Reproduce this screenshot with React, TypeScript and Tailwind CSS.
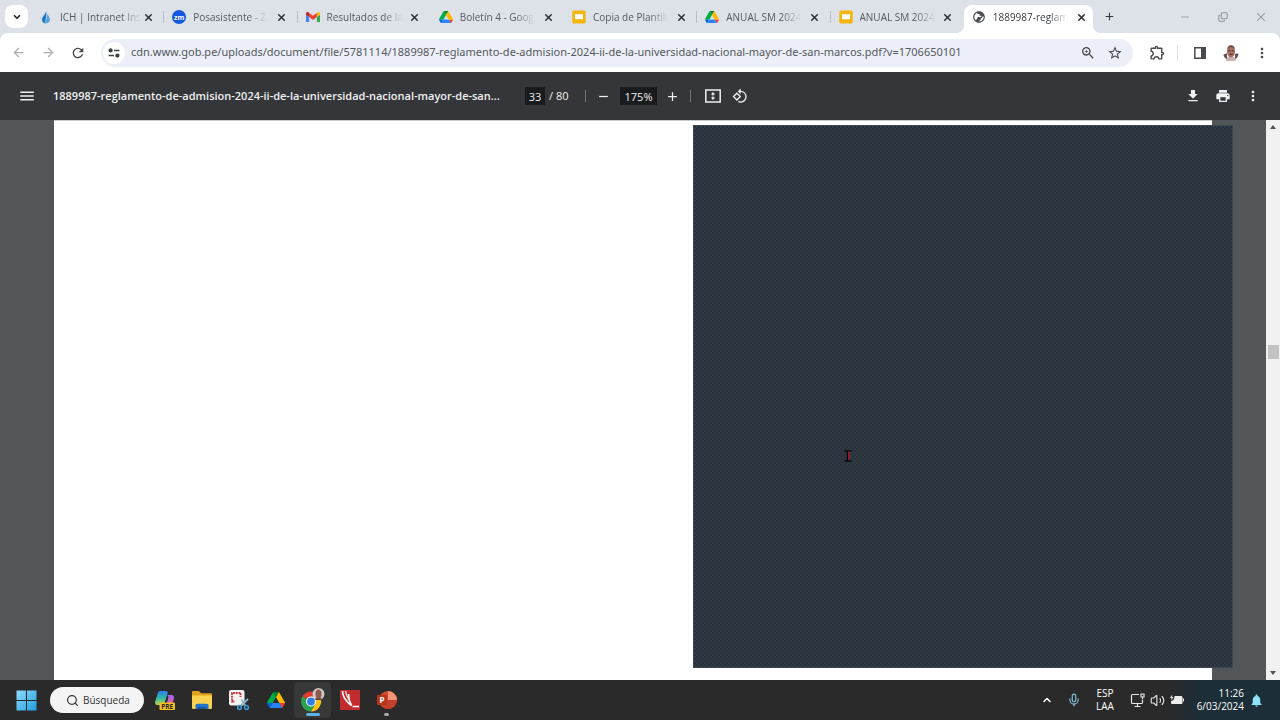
import React, { useState } from 'react';
import clsx from 'clsx';
import {
  MdAdd,
  MdArrowBack,
  MdArrowForward,
  MdFileDownload,
  MdMenu,
  MdMoreVert,
  MdNotifications,
  MdOutlineExtension,
  MdPrint,
  MdPublic,
  MdRefresh,
  MdRemove,
  MdRotate90DegreesCcw,
  MdStarOutline,
  MdZoomIn,
} from 'react-icons/md';
import { ChevronDown, ChevronUp, Copy, Mic, Minus, Search, Volume2, X } from 'lucide-react';

function DriveIcon({ className }: { className: string }) {
  return (
    <svg viewBox="0 0 87.3 78" className={className} aria-hidden="true">
      <path d="m6.6 66.85 3.85 6.65c.8 1.4 1.95 2.5 3.3 3.3l13.75-23.8h-27.5c0 1.55.4 3.1 1.2 4.5z" fill="#0066da" />
      <path d="m43.65 25-13.75-23.8c-1.35.8-2.5 1.9-3.3 3.3l-25.4 44a9.06 9.06 0 0 0 -1.2 4.5h27.5z" fill="#00ac47" />
      <path d="m73.55 76.8c1.35-.8 2.5-1.9 3.3-3.3l1.6-2.75 7.65-13.25c.8-1.4 1.2-2.95 1.2-4.5h-27.5l5.85 11.5z" fill="#ea4335" />
      <path d="m43.65 25 13.75-23.8c-1.35-.8-2.9-1.2-4.5-1.2h-18.5c-1.6 0-3.15.45-4.5 1.2z" fill="#00832d" />
      <path d="m59.8 53h-32.3l-13.75 23.8c1.35.8 2.9 1.2 4.5 1.2h50.8c1.6 0 3.15-.45 4.5-1.2z" fill="#2684fc" />
      <path d="m73.4 26.5-12.7-22c-.8-1.4-1.95-2.5-3.3-3.3l-13.75 23.8 16.15 28h27.45c0-1.55-.4-3.1-1.2-4.5z" fill="#ffba00" />
    </svg>
  );
}

function SlidesIcon() {
  return (
    <svg viewBox="0 0 14 14" className="size-3.5" aria-hidden="true">
      <rect x="0.3" y="0.5" width="13.4" height="13" rx="1.6" fill="#f4b60f" />
      <rect x="3" y="4.2" width="8" height="5" fill="#fff" />
    </svg>
  );
}

function GmailIcon() {
  return (
    <svg viewBox="52 42 88 66" className="w-3.5" aria-hidden="true">
      <path fill="#4285f4" d="M58 108h14V74L52 59v43c0 3.32 2.69 6 6 6" />
      <path fill="#34a853" d="M120 108h14c3.32 0 6-2.69 6-6V59l-20 15" />
      <path fill="#fbbc04" d="M120 48v26l20-15v-8c0-7.42-8.47-11.65-14.4-7.2" />
      <path fill="#ea4335" d="M72 74V48l24 18 24-18v26L96 92" />
      <path fill="#c5221f" d="M52 51v8l20 15V48l-5.6-4.2c-5.94-4.45-14.4-.22-14.4 7.2" />
    </svg>
  );
}

function DropIcon() {
  return (
    <svg viewBox="0 0 14 14" className="size-3.5" aria-hidden="true">
      <path d="M7.2 0.8C7 4 3 6.6 3 9.8c0 2 1.5 3.4 3.8 3.6C5.5 11 7.9 8.4 7.2 0.8z" fill="#1c74c9" />
      <path d="M8.2 3.4c.6 3.6-2 6.5-1.4 10 2.6-.1 4.1-1.4 4.1-3.6 0-2.2-1.6-3.8-2.7-6.4z" fill="#55a4e0" />
      <path d="M2.4 5.6C1.2 7.6.8 9.2 1.6 10.8c.4-1.6.4-3 .8-5.2z" fill="#a6d0ee" />
    </svg>
  );
}

function ZoomIcon() {
  return (
    <span className="flex size-3.5 items-center justify-center rounded-full bg-[#1558e0] text-[7px] leading-none font-bold text-white">
      zm
    </span>
  );
}

const TABS = [
  { title: 'ICH | Intranet Ins', icon: <DropIcon />, divider: true },
  { title: 'Posasistente - Z', icon: <ZoomIcon />, divider: true },
  { title: 'Resultados de la', icon: <GmailIcon /> },
  { title: 'Boletín 4 - Goog', icon: <DriveIcon className="w-3.5" /> },
  { title: 'Copia de Plantill', icon: <SlidesIcon />, divider: true },
  { title: 'ANUAL SM 2024', icon: <DriveIcon className="w-3.5" />, divider: true },
  { title: 'ANUAL SM 2024', icon: <SlidesIcon /> },
  { title: '1889987-reglam', icon: <MdPublic className="size-3.5 -scale-x-100 text-[#4a4d51]" /> },
];

function TabStrip() {
  const [active, setActive] = useState(7);

  return (
    <div className="flex h-[33px] shrink-0 bg-[#dde1e8]">
      <div className="flex w-[31px] shrink-0 items-center pl-[5px]">
        <button aria-label="Buscar pestañas" className="flex size-[23px] items-center justify-center rounded-lg bg-white">
          <ChevronDown className="size-2.5 text-[#222]" strokeWidth={4} />
        </button>
      </div>
      <div role="tablist" className="flex min-w-0 flex-1 pt-[5px]">
        {TABS.map((tab, i) => (
          <div key={i} className="relative flex min-w-0 flex-1 pr-1">
            <div
              className={clsx(
                'relative flex min-w-0 flex-1 items-center gap-[7px] pr-1 pb-1 pl-2',
                active === i &&
                  'rounded-t-lg bg-white before:absolute before:bottom-0 before:-left-2 before:size-2 before:bg-[radial-gradient(circle_at_0_0,transparent_8px,white_8px)] after:absolute after:-right-2 after:bottom-0 after:size-2 after:bg-[radial-gradient(circle_at_100%_0,transparent_8px,white_8px)]',
              )}
            >
              <button
                role="tab"
                aria-selected={active === i}
                onClick={() => setActive(i)}
                className="flex min-w-0 flex-1 items-center gap-[7px]"
              >
                <span className="flex w-3.5 shrink-0 justify-center">{tab.icon}</span>
                <span
                  className={clsx(
                    'flex-1 text-left text-[10px] leading-4 whitespace-nowrap [mask-image:linear-gradient(to_right,black_75%,transparent)]',
                    active === i ? 'text-[#3c3f43]' : 'text-[#565a61]',
                  )}
                >
                  {tab.title}
                </span>
              </button>
              <button aria-label="Cerrar pestaña" className="flex w-4 shrink-0 justify-center text-[#33363a]">
                <X className="size-[11px]" strokeWidth={3.5} />
              </button>
            </div>
            {tab.divider && <span className="absolute top-1.5 right-0 h-3 w-px bg-[#b9bdc5]" />}
          </div>
        ))}
      </div>
      <button aria-label="Nueva pestaña" className="flex w-6 shrink-0 items-center justify-center text-[#33363a]">
        <MdAdd className="size-[13px]" />
      </button>
      <div className="ml-[45px] flex shrink-0 text-[#8f9399]">
        <button aria-label="Minimizar" className="flex w-[38px] items-center justify-center">
          <Minus className="size-3" strokeWidth={1.5} />
        </button>
        <button aria-label="Restaurar" className="flex w-[38px] items-center justify-center">
          <Copy className="size-2.5 -scale-x-100 rotate-180" strokeWidth={2.5} />
        </button>
        <button aria-label="Cerrar" className="flex w-[38px] items-center justify-center">
          <X className="size-3.5" strokeWidth={1.8} />
        </button>
      </div>
    </div>
  );
}

function TuneIcon() {
  return (
    <svg viewBox="0 0 12 10" className="w-3" fill="none" stroke="#3c4043" strokeWidth="1.5" aria-hidden="true">
      <circle cx="2.6" cy="2.4" r="1.4" fill="#3c4043" />
      <path d="M6 2.4h5.4M.6 7.6H6" />
      <circle cx="9.4" cy="7.6" r="1.4" fill="#3c4043" />
    </svg>
  );
}

function Avatar() {
  return (
    <svg viewBox="0 0 16 16" className="size-4" aria-hidden="true">
      <path d="M0.4 9.5 4 8.2v6.4C2 13.4.8 11.8.4 9.5zM15.6 8.5 12 8.8v5.6c2-1.2 3.4-3.4 3.6-5.9z" fill="#6d5250" />
      <path d="M3 16c.2-3.4 2-4.6 5-4.6s4.8 1.2 5 4.2c-3 .6-7 .6-10 .4z" fill="#c9b2ae" />
      <ellipse cx="8" cy="6.4" rx="4" ry="6" fill="#a56f63" />
      <path d="M4.2 5C4.4 1.4 6 .3 8 .3S11.7 1.3 11.9 5c-1-2-2-2.7-3.9-2.7S5.2 3 4.2 5z" fill="#77504a" />
      <path d="M5.2 5.8h2.2M8.7 5.8h2.2M6.4 9.3h3.2" stroke="#4e2f2c" strokeWidth="1" />
    </svg>
  );
}

function AddressBar() {
  return (
    <div className="bg-[#dde1e8]">
      <div className="flex h-[39px] items-center rounded-t-lg bg-white pl-[3px] text-[#46494d]">
        <button aria-label="Atrás" className="flex w-[30px] shrink-0 justify-center text-[#a9acb0]">
          <MdArrowBack className="size-[15px]" />
        </button>
        <button aria-label="Adelante" className="flex w-[30px] shrink-0 justify-center text-[#a9acb0]">
          <MdArrowForward className="size-[15px]" />
        </button>
        <button aria-label="Recargar" className="flex w-[30px] shrink-0 justify-center">
          <MdRefresh className="size-4" />
        </button>
        <div className="ml-2 flex h-7 min-w-0 flex-1 items-center rounded-full bg-[#eceff7] pr-[5px] pl-0.5">
          <button aria-label="Información del sitio" className="flex size-[22px] shrink-0 items-center justify-center rounded-full bg-white">
            <TuneIcon />
          </button>
          <input
            aria-label="Dirección"
            className="ml-1.5 min-w-0 flex-1 bg-transparent font-['Noto_Sans',sans-serif] text-[11px] text-[#54585e] outline-none"
            defaultValue="cdn.www.gob.pe/uploads/document/file/5781114/1889987-reglamento-de-admision-2024-ii-de-la-universidad-nacional-mayor-de-san-marcos.pdf?v=1706650101"
          />
          <button aria-label="Zoom" className="flex w-[27px] shrink-0 justify-center">
            <MdZoomIn className="size-4" />
          </button>
          <button aria-label="Favoritos" className="flex w-[27px] shrink-0 justify-center">
            <MdStarOutline className="size-4" />
          </button>
        </div>
        <button aria-label="Extensiones" className="ml-2 flex w-8 shrink-0 justify-center">
          <MdOutlineExtension className="size-[17px]" />
        </button>
        <span className="ml-1 h-4 w-px shrink-0 bg-[#dfe2e8]" />
        <button aria-label="Panel lateral" className="ml-1.5 flex w-8 shrink-0 justify-center">
          <svg viewBox="0 0 12 12" className="size-3">
            <path d="M.8.8h10.4v10.4H.8z" fill="none" stroke="currentColor" strokeWidth="1.5" />
            <path d="M7 1h4.5v10H7z" fill="currentColor" />
          </svg>
        </button>
        <button aria-label="Perfil" className="flex w-[30px] shrink-0 justify-center">
          <Avatar />
        </button>
        <button aria-label="Menú" className="mr-0.5 flex w-8 shrink-0 justify-center">
          <MdMoreVert className="size-4" />
        </button>
      </div>
    </div>
  );
}

function PdfToolbar() {
  return (
    <div className="flex h-12 shrink-0 items-center bg-[#343639] text-[#f0f0f0]">
      <button aria-label="Menú" className="ml-[17px] flex w-5 shrink-0 justify-center">
        <MdMenu className="size-[18px]" />
      </button>
      <h1 className="ml-4 w-[454px] text-[11px] font-semibold whitespace-nowrap">
        1889987-reglamento-de-admision-2024-ii-de-la-universidad-nacional-mayor-de-san...
      </h1>
      <input
        aria-label="Página"
        defaultValue="33"
        className="ml-[18px] h-[18px] w-5 bg-[#1a1b1d] text-center text-[11px] outline-none"
      />
      <span className="ml-1 w-5 text-[11px] whitespace-nowrap">/ 80</span>
      <span className="ml-4 h-3 w-px bg-[#75777a]" />
      <button aria-label="Alejar" className="ml-[7px] flex w-5 justify-center">
        <MdRemove className="size-[15px]" />
      </button>
      <input
        aria-label="Nivel de zoom"
        defaultValue="175%"
        className="ml-[7px] h-[18px] w-[37px] bg-[#1a1b1d] text-center text-[11px] outline-none"
      />
      <button aria-label="Acercar" className="ml-[5px] flex w-5 justify-center">
        <MdAdd className="size-[15px]" />
      </button>
      <span className="ml-2 h-3 w-px bg-[#75777a]" />
      <button aria-label="Ajustar a la página" className="ml-3 flex w-5 justify-center">
        <svg viewBox="0 0 16 14" className="w-4" fill="currentColor">
          <path d="M.8 1h14.4v12H.8z" fill="none" stroke="currentColor" strokeWidth="1.5" />
          <path d="M8 3 5.8 5.5h1.5v1h1.4v-1h1.5zM8 11 5.8 8.5h1.5v-1h1.4v1h1.5z" />
        </svg>
      </button>
      <button aria-label="Girar" className="ml-[7px] flex w-5 justify-center">
        <MdRotate90DegreesCcw className="size-4" />
      </button>
      <div className="mr-3 ml-auto flex">
        <button aria-label="Descargar" className="flex w-[30px] justify-center">
          <MdFileDownload className="size-4" />
        </button>
        <button aria-label="Imprimir" className="flex w-[30px] justify-center">
          <MdPrint className="size-4" />
        </button>
        <button aria-label="Más acciones" className="flex w-[30px] justify-center">
          <MdMoreVert className="size-4" />
        </button>
      </div>
    </div>
  );
}

function Viewer() {
  return (
    <main className="flex min-h-0 flex-1 bg-[#525659]">
      <div className="relative flex min-w-0 flex-1 px-[54px]">
        <div className="flex-1 border-t border-[#c9cacb] bg-white" />
        <div className="absolute top-[5px] right-[33px] bottom-3 w-[540px] border border-[#3a4650] bg-[#29323c] bg-[conic-gradient(#303a44_25%,transparent_0_50%,#303a44_0_75%,transparent_0)] bg-[length:4px_4px]">
          <svg viewBox="0 0 8 12" className="absolute top-[324px] left-[150px] w-2" fill="none" aria-hidden="true">
            <path d="M.5 1h7M.5 11h7M3.500 1v10" stroke="#08090b" strokeWidth="1.5" />
            <path d="M5 1.500v8.500" stroke="#a81a22" strokeWidth="1.500" />
          </svg>
        </div>
      </div>
      <div className="flex w-3.5 shrink-0 flex-col items-center bg-[#f1f1f2] py-[5px]">
        <span className="border-x-[3px] border-b-4 border-x-transparent border-b-[#505050]" />
        <span className="flex-[216]" />
        <span className="h-3.5 w-[11px] bg-[#c3c3c3]" />
        <span className="flex-[312]" />
        <span className="border-x-[3px] border-t-4 border-x-transparent border-t-[#505050]" />
      </div>
    </main>
  );
}

function CopilotIcon() {
  return (
    <svg viewBox="0 0 22 22" className="size-[22px]" aria-hidden="true">
      <defs>
        <linearGradient id="cp-a" x1="0" y1="0" x2="0" y2="1">
          <stop offset="0" stopColor="#2f7df0" />
          <stop offset="0.5" stopColor="#2fb8a8" />
          <stop offset="1" stopColor="#b8d84a" />
        </linearGradient>
        <linearGradient id="cp-b" x1="0" y1="0" x2="0" y2="1">
          <stop offset="0" stopColor="#9a6cf4" />
          <stop offset="0.6" stopColor="#e85bb0" />
          <stop offset="1" stopColor="#f79a55" />
        </linearGradient>
      </defs>
      <path d="M6.5 2H12c1.5 0 2 1 1.6 2.4L10.5 14c-.5 1.4-1.3 2-2.7 2H3.5C1.5 16 .7 14.5 1.2 12.6L3.7 4.5C4.2 2.8 5 2 6.5 2z" fill="url(#cp-a)" />
      <path d="M12.8 6h4.7c2 0 2.9 1.5 2.4 3.4l-2 7c-.5 1.6-1.5 2.6-3 2.6H9.5c2 0 2.3-1.5 2.8-3l2-7c.3-1.500 0-2.400-1.500-3z" fill="url(#cp-b)" />
      <rect x="5.5" y="13.5" width="15.5" height="7.5" rx="1" fill="#f5c022" />
      <text x="13.25" y="19.5" textAnchor="middle" fontSize="6.5" fontWeight="700" fill="#2b2b2b">
        PRE
      </text>
    </svg>
  );
}

function FolderIcon() {
  return (
    <svg viewBox="0 0 22 20" className="w-[22px]" aria-hidden="true">
      <path d="M1 2.2C1 1.5 1.5 1 2.2 1h5.6l2.4 2.2h9.6c.7 0 1.2.5 1.2 1.2V8H1z" fill="#e0a21a" />
      <path d="M1 5.5h20v12.3c0 .7-.5 1.2-1.2 1.2H2.2c-.7 0-1.2-.5-1.2-1.2z" fill="#fbd24f" />
      <path d="M4.5 19v-3.5c0-1 .8-1.7 1.7-1.7h9.6c1 0 1.7.8 1.7 1.7V19z" fill="#1f74c8" />
      <path d="M7 17h8v2H7z" fill="#155a9e" />
    </svg>
  );
}

function SnipIcon() {
  return (
    <svg viewBox="0 0 22 22" className="size-[22px]" fill="none" aria-hidden="true">
      <rect x="1" y="1" width="15.5" height="15.5" rx="2" fill="#f4f1f1" />
      <path d="M12.500 4H4v8.500h3M12.500 4v4" stroke="#c2383b" strokeWidth="1.8" strokeDasharray="2 0.8" />
      <path d="m20 10-7.5 7M13.500 10.500l4 6.500" stroke="#8ab4cf" strokeWidth="1.8" />
      <circle cx="11.5" cy="18.5" r="1.9" stroke="#3f97cf" strokeWidth="1.5" />
      <circle cx="18.5" cy="18.5" r="1.9" stroke="#3f97cf" strokeWidth="1.5" />
    </svg>
  );
}

function ChromeIcon() {
  return (
    <svg viewBox="0 0 26 26" className="size-[26px]" aria-hidden="true">
      <path d="M11 14.5 2.4 9.6A10 10 0 0 1 19.7 9.5H11z" fill="#e23c30" />
      <path d="M11 14.5 2.4 9.5A10 10 0 0 0 11 24.5l4.3-7.5z" fill="#2ba24c" />
      <path d="M11 9.5h8.7A10 10 0 0 1 11 24.5l4.3-7.5z" fill="#fbc116" />
      <circle cx="11" cy="14.5" r="5" fill="#fff" />
      <circle cx="11" cy="14.5" r="3.9" fill="#2f7de9" />
      <circle cx="18.5" cy="7" r="6" fill="#cfcac8" />
      <ellipse cx="18.5" cy="7" rx="3" ry="4.5" fill="#8b5a4f" />
      <path d="M14.5 12.2c.8-1.7 7.2-1.7 8 0-2 1.2-6 1.2-8 0z" fill="#6b4743" />
    </svg>
  );
}

function DrawAppIcon() {
  return (
    <svg viewBox="0 0 20 20" className="size-5" fill="none" aria-hidden="true">
      <rect width="20" height="20" rx="1" fill="#c32c2f" />
      <path d="M2.500 1c0 5 3 10 9 14.500C9.500 12 8.500 9 8.500 4" stroke="#fff" strokeWidth="1.6" />
      <path d="M5.500 1c.5 4 2 7 4 9.500" stroke="#f7dada" strokeWidth="1.4" />
      <path d="M12.5 16.5H19" stroke="#fff" strokeWidth="1.5" />
    </svg>
  );
}

function PowerPointIcon() {
  return (
    <svg viewBox="0 0 20 20" className="size-5" aria-hidden="true">
      <circle cx="11" cy="10" r="9" fill="#d6492f" />
      <path d="M11 1a9 9 0 0 1 9 9h-9z" fill="#f59477" />
      <path d="M2 10h18a9 9 0 0 1-4 7.5A9 9 0 0 1 2 10z" fill="#c2402a" />
      <rect x="0" y="5" width="10" height="10" rx="1" fill="#b5351d" />
      <text x="5" y="13" textAnchor="middle" fontSize="8" fontWeight="700" fill="#fff">
        P
      </text>
    </svg>
  );
}

const APPS = [
  { name: 'Copilot', icon: <CopilotIcon /> },
  { name: 'Explorador de archivos', icon: <FolderIcon /> },
  { name: 'Recortes', icon: <SnipIcon /> },
  { name: 'Google Drive', icon: <DriveIcon className="w-[18px]" /> },
  { name: 'Google Chrome', icon: <ChromeIcon />, state: 'active' },
  { name: 'Dibujo', icon: <DrawAppIcon /> },
  { name: 'PowerPoint', icon: <PowerPointIcon />, state: 'open' },
];

function Taskbar() {
  return (
    <footer className="flex h-10 shrink-0 items-center bg-[#2a2a2a] bg-[linear-gradient(to_left,#1c2e37_80px,transparent_110px)] text-white">
      <button aria-label="Inicio" className="ml-4 shrink-0">
        <svg viewBox="0 0 21 21" className="size-[21px]">
          <defs>
            <linearGradient id="win" x1="0" y1="0" x2="1" y2="1">
              <stop offset="0" stopColor="#8fdcfb" />
              <stop offset="1" stopColor="#1f9de0" />
            </linearGradient>
          </defs>
          <path d="M.5.5H10V10H.5zM11 .5h9.5V10H11zM.5 11H10v9.5H.5zM11 11h9.5v9.5H11z" fill="url(#win)" />
        </svg>
      </button>
      <button className="ml-[13px] flex h-[26px] w-[94px] shrink-0 items-center gap-1 rounded-full bg-[#f4f4f4] pl-4 text-[10px] text-[#333]">
        <Search className="size-[13px]" strokeWidth={2.2} />
        Búsqueda
      </button>
      <nav className="ml-0.5 flex h-full items-center">
        {APPS.map((app) => (
          <button
            key={app.name}
            aria-label={app.name}
            className={clsx(
              'relative flex h-9 w-[37px] items-center justify-center rounded',
              app.state === 'active' && 'bg-[#373838]',
            )}
          >
            {app.icon}
            {app.state === 'active' && <span className="absolute bottom-0.5 h-[3px] w-3.5 rounded-full bg-[#5cb3e6]" />}
            {app.state === 'open' && <span className="absolute bottom-0.5 h-[3px] w-[5px] rounded-full bg-[#a5a5a5]" />}
          </button>
        ))}
      </nav>
      <div className="mr-4 ml-auto flex shrink-0 items-center">
        <ChevronUp className="size-3" strokeWidth={3} />
        <Mic className="ml-3.5 size-3.5 text-[#83bdd8]" strokeWidth={2} />
        <div className="ml-[9px] w-[30px] text-center text-[10px] leading-[13px]">
          ESP
          <br />
          LAA
        </div>
        <svg viewBox="0 0 15 15" className="ml-2.5 size-[15px]" fill="none" stroke="#e6e6e6" strokeWidth="1.2" aria-hidden="true">
          <path d="M9 1.5H2.5c-.6 0-1 .4-1 1v7c0 .6.4 1 1 1h9c.6 0 1-.4 1-1V7M4.5 13.5h6M7.5 10.5v3" />
          <path d="M11 1h3v3h-3zM12.5 4v2.5" />
        </svg>
        <Volume2 className="ml-[5px] size-[15px] text-[#e6e6e6]" strokeWidth={1.8} />
        <svg viewBox="0 0 15 12" className="ml-1 w-[15px]" fill="#ececec" aria-hidden="true">
          <path d="M5.5 2H12c1 0 1.5.6 1.5 1.5v5c0 1-.5 1.500-1.500 1.500H3.500C2.500 10 2 9.500 2 8.500V7c2 0 3.500-2 3.500-5zM14 4.500h1v3h-1z" />
          <path d="M3.2.5 1 4h1.5L2 6.5 4.5 3H3z" />
        </svg>
        <time className="ml-3 w-12 text-right text-[10px] leading-[13px] whitespace-nowrap">
          11:26
          <br />
          6/03/2024
        </time>
        <MdNotifications className="ml-[5px] size-[15px] text-[#8fe3f7]" />
      </div>
    </footer>
  );
}

export default function App() {
  return (
    <div className="flex h-screen flex-col overflow-hidden font-['Open_Sans','Noto_Sans',sans-serif]">
      <TabStrip />
      <AddressBar />
      <PdfToolbar />
      <Viewer />
      <Taskbar />
    </div>
  );
}
